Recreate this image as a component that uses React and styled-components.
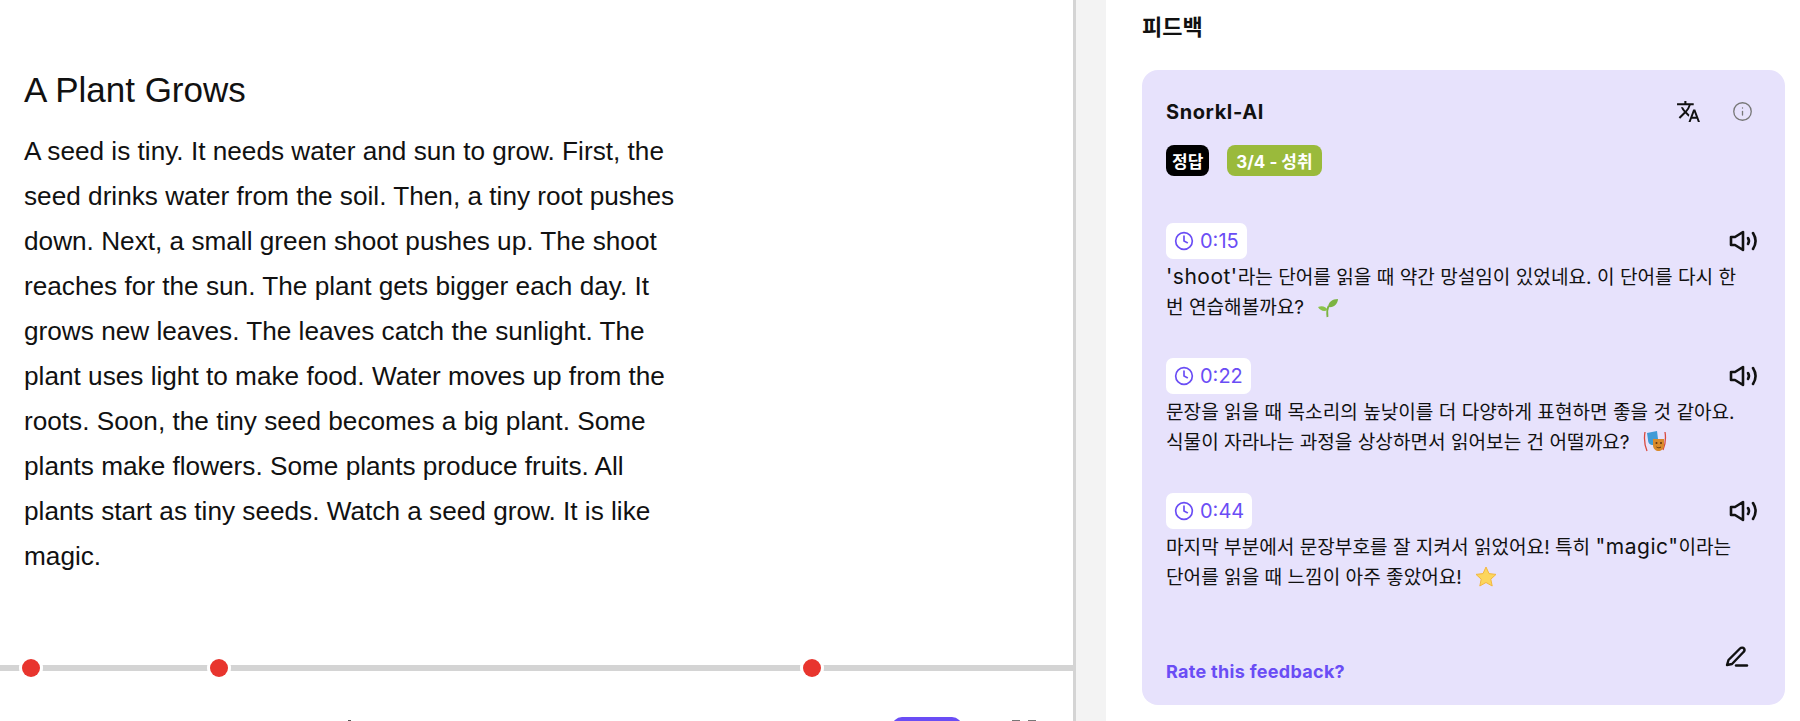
import React from 'react';
import styled, { createGlobalStyle } from 'styled-components';
import { Clock, Info } from 'lucide-react';
import { MdTranslate } from 'react-icons/md';

const GlobalStyle = createGlobalStyle`
	html, body {
		margin: 0;
		padding: 0;
		background: #fff;
	}
	* {
		box-sizing: border-box;
	}
`;

const UI_FONT = `Inter, "Noto Sans CJK KR", sans-serif`;
const PURPLE = '#6a4df5';

const Page = styled.div`
	display: flex;
	width: 1800px;
	height: 721px;
	overflow: hidden;
`;
const ReadingPane = styled.main`
	display: flex;
	flex-direction: column;
	width: 1073px;
	height: 721px;
	overflow: hidden;
	font-family: 'Liberation Sans', Arial, sans-serif;
	color: #111;
`;
const Passage = styled.article`
	flex: none;
	height: 661px;
	padding: 70px 24px 0;
`;
const PassageTitle = styled.h1`
	margin: 0 0 19px;
	font-size: 35px;
	line-height: 40px;
	font-weight: 400;
`;
const PassageText = styled.p`
	width: 660px;
	margin: 0;
	font-size: 26.2px;
	line-height: 45px;
`;
const Timeline = styled.div`
	position: relative;
	flex: none;
	height: 6px;
	margin-top: 4px;
	background: #d4d4d4;
`;
const Marker = styled.span`
	position: absolute;
	top: -6px;
	left: ${(props) => props.$at - 9}px;
	width: 18px;
	height: 18px;
	border-radius: 50%;
	background: #e8352e;
	box-shadow: 0 0 0 3px #fff;
`;
const Toolbar = styled.div`
	display: flex;
	align-items: flex-start;
	flex: none;
	margin-top: 46px;
	padding-left: 348px;
`;
const ToolTick = styled.span`
	width: 3px;
	height: 1px;
	margin-top: 3px;
	background: #555;
`;
const PlayButton = styled.button`
	width: 70px;
	height: 36px;
	margin-left: 541px;
	border: 0;
	border-radius: 10px;
	background: ${PURPLE};
`;
const ExpandIcon = styled.span`
	display: flex;
	justify-content: space-between;
	width: 24px;
	margin: 3px 0 0 50px;
	&::before,
	&::after {
		content: '';
		width: 8px;
		height: 2px;
		background: #777;
	}
`;
const Gutter = styled.div`
	flex: none;
	width: 33px;
	height: 721px;
	border-left: 3px solid #d4d4d4;
	background: #f3f3f3;
`;
const FeedbackPane = styled.aside`
	display: flex;
	flex-direction: column;
	width: 694px;
	height: 721px;
	padding: 0 15px 16px 36px;
	font-family: ${UI_FONT};
	color: #111;
`;
const PaneTitle = styled.h2`
	flex: none;
	height: 70px;
	margin: 0;
	padding-top: 13px;
	font-size: 22px;
	line-height: 28px;
	font-weight: 600;
`;
const Card = styled.section`
	display: flex;
	flex-direction: column;
	height: 635px;
	padding: 26px 24px 0 24px;
	border-radius: 16px;
	background: #e7e2fc;
`;
const CardHead = styled.div`
	display: flex;
	align-items: center;
	justify-content: space-between;
	height: 30px;
`;
const CardTitle = styled.h3`
	margin: 1px 0 0;
	font-size: 20px;
	line-height: 30px;
	font-weight: 700;
	letter-spacing: 0.6px;
`;
const HeadIcons = styled.div`
	display: flex;
	align-items: center;
	gap: 31px;
	padding-right: 8px;
	color: #111;
	svg:last-child {
		color: #777;
	}
`;
const Badges = styled.div`
	display: flex;
	gap: 18px;
	margin-top: 19px;
`;
const Badge = styled.span`
	display: flex;
	align-items: center;
	justify-content: center;
	height: 31px;
	padding: 0 ${(props) => props.$pad}px;
	border-radius: 8px;
	background: ${(props) => props.$bg};
	color: #fff;
	font-size: 17px;
	font-weight: 700;
`;
const Notes = styled.div`
	display: flex;
	flex-direction: column;
	gap: 36px;
	margin-top: 47px;
`;
const Note = styled.div`
	display: flex;
	flex-direction: column;
`;
const NoteHead = styled.div`
	display: flex;
	align-items: center;
	justify-content: space-between;
	padding-right: 3px;
`;
const TimeChip = styled.span`
	display: flex;
	align-items: center;
	gap: 6px;
	height: 36px;
	padding: 0 8px;
	border-radius: 7px;
	background: #fff;
	color: ${PURPLE};
	font-size: 20px;
`;
const NoteText = styled.p`
	margin: 3px 0 0;
	font-size: 19.1px;
	line-height: 30px;
	svg {
		vertical-align: -4px;
		margin-left: 8px;
	}
`;
const LatinWord = styled.span`
	font-size: 21px;
	line-height: 20px;
	letter-spacing: 0.5px;
`;
const CardFoot = styled.div`
	display: flex;
	align-items: flex-start;
	justify-content: space-between;
	margin-top: 53px;
	padding-right: 12px;
`;
const RateLink = styled.a`
	margin-top: 13px;
	color: ${PURPLE};
	font-size: 18px;
	line-height: 28px;
	font-weight: 700;
	letter-spacing: 0.3px;
`;

function Speaker() {
	return (
		<svg width="29" height="22" viewBox="0 0 29 22" fill="none" stroke="#111" strokeWidth="2.600" strokeLinecap="round" strokeLinejoin="round">
			<path d="M2 7h4l8-5v18l-8-5H2z" />
			<path d="M19 8c1.300 2 1.300 4 0 6" />
			<path d="M24 3c3.200 5 3.200 11 0 16" />
		</svg>
	);
}

function Pen() {
	return (
		<svg width="24" height="23" viewBox="0 0 24 23" fill="none" stroke="#111" strokeWidth="2.400" strokeLinecap="round" strokeLinejoin="round">
			<path d="M2 20l1.500-5L15 3.500c1.200-1.200 3.200-1.200 4 0s.6 2.500-.5 3.500L7 19z" />
			<path d="M11 20.500h11" />
		</svg>
	);
}

function Seedling() {
	return (
		<svg width="22" height="22" viewBox="0 0 22 22">
			<path d="M10.500 21c-.6-4-.3-8 1-11" fill="none" stroke="#7cb342" strokeWidth="1.800" />
			<path d="M11 11c.5-5 4-8 10-8-.4 5-4 9-10 8z" fill="#7cb342" />
			<path d="M10.500 14C9 10.500 5 9.500 1 11c2 3.500 6 5 9.500 3z" fill="#8bc34a" />
		</svg>
	);
}

function Masks() {
	return (
		<svg width="24" height="24" viewBox="0 0 24 24">
			<path d="M2 3c-1 6-.5 13 2 19" fill="none" stroke="#d9483b" strokeWidth="1.300" />
			<path d="M22 3c1 6 .5 12-2 18" fill="none" stroke="#d9483b" strokeWidth="1.300" />
			<path d="M4 4l10-2 1 8c0 4-3 6-5 6-3 0-5-2-5-5z" fill="#3f9bd6" />
			<path d="M10 10h11v6c0 4-3 6-5.500 6S10 20 10 16z" fill="#d98a2b" />
			<circle cx="13.500" cy="14" r="1" fill="#5b3312" />
			<circle cx="18" cy="14" r="1" fill="#5b3312" />
			<path d="M13.500 18c1.500 1 3 1 4.500 0" fill="none" stroke="#5b3312" strokeWidth="1" />
		</svg>
	);
}

function Star() {
	return (
		<svg width="22" height="22" viewBox="0 0 22 22">
			<path
				d="M11 1l3 6.600 7 .8-5.200 4.800L17.200 20 11 16.500 4.800 20l1.400-6.800L1 8.400l7-.8z"
				fill="#fcd65c"
				stroke="#f3b73f"
				strokeWidth="1"
				strokeLinejoin="round"
			/>
		</svg>
	);
}

const markers = [31, 219, 812];

const notes = [
	{
		time: '0:15',
		first: (
			<>
				<LatinWord>'shoot'</LatinWord>라는 단어를 읽을 때 약간 망설임이 있었네요. 이 단어를 다시 한
			</>
		),
		second: '번 연습해볼까요? ',
		emoji: <Seedling />,
	},
	{
		time: '0:22',
		first: '문장을 읽을 때 목소리의 높낮이를 더 다양하게 표현하면 좋을 것 같아요.',
		second: '식물이 자라나는 과정을 상상하면서 읽어보는 건 어떨까요? ',
		emoji: <Masks />,
	},
	{
		time: '0:44',
		first: (
			<>
				마지막 부분에서 문장부호를 잘 지켜서 읽었어요! 특히 <LatinWord>"magic"</LatinWord>이라는
			</>
		),
		second: '단어를 읽을 때 느낌이 아주 좋았어요! ',
		emoji: <Star />,
	},
];

export default function App() {
	return (
		<Page>
			<GlobalStyle />
			<ReadingPane>
				<Passage>
					<PassageTitle>A Plant Grows</PassageTitle>
					<PassageText>
						A seed is tiny. It needs water and sun to grow. First, the seed drinks water from the soil. Then, a tiny root pushes
						down. Next, a small green shoot pushes up. The shoot reaches for the sun. The plant gets bigger each day. It grows new
						leaves. The leaves catch the sunlight. The plant uses light to make food. Water moves up from the roots. Soon, the tiny
						seed becomes a big plant. Some plants make flowers. Some plants produce fruits. All plants start as tiny seeds. Watch a
						seed grow. It is like magic.
					</PassageText>
				</Passage>
				<Timeline>
					{markers.map((at) => (
						<Marker key={at} $at={at} />
					))}
				</Timeline>
				<Toolbar>
					<ToolTick />
					<PlayButton />
					<ExpandIcon />
				</Toolbar>
			</ReadingPane>
			<Gutter />
			<FeedbackPane>
				<PaneTitle>피드백</PaneTitle>
				<Card>
					<CardHead>
						<CardTitle>Snorkl-AI</CardTitle>
						<HeadIcons>
							<MdTranslate size={25} />
							<Info size={21} strokeWidth={1.5} />
						</HeadIcons>
					</CardHead>
					<Badges>
						<Badge $bg="#000" $pad={6}>정답</Badge>
						<Badge $bg="#9aba3b" $pad={9}>3/4 - 성취</Badge>
					</Badges>
					<Notes>
						{notes.map((note) => (
							<Note key={note.time}>
								<NoteHead>
									<TimeChip>
										<Clock size={20} strokeWidth={2} />
										{note.time}
									</TimeChip>
									<Speaker />
								</NoteHead>
								<NoteText>
									{note.first}
									<br />
									{note.second}
									{note.emoji}
								</NoteText>
							</Note>
						))}
					</Notes>
					<CardFoot>
						<RateLink>Rate this feedback?</RateLink>
						<Pen />
					</CardFoot>
				</Card>
			</FeedbackPane>
		</Page>
	);
}
